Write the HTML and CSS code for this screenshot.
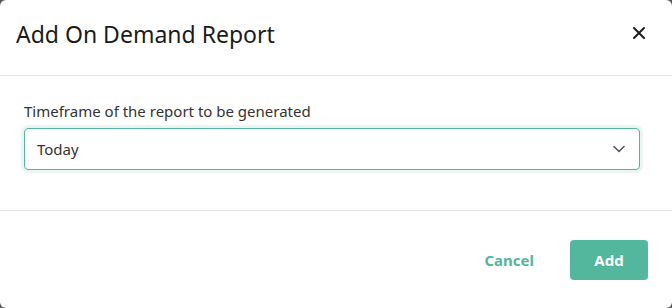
FILE: index.html
```html
<!DOCTYPE html>
<html>
<head>
<meta charset="utf-8">
<link rel="stylesheet" href="styles.css">
</head>
<body>
<div class="dialog">
  <div class="header">
    <h1 class="title">Add On Demand Report</h1>
    <button class="close" aria-label="Close">
      <svg width="14" height="14" viewBox="0 0 14 14"><path d="M2 2L12 12M12 2L2 12" stroke="#1d1d1d" stroke-width="2" stroke-linecap="round"/></svg>
    </button>
  </div>
  <div class="body">
    <label class="label">Timeframe of the report to be generated</label>
    <div class="select">
      <span class="value">Today</span>
      <svg class="chev" width="12" height="8" viewBox="0 0 12 8"><path d="M1 1.5L6 6.5L11 1.5" fill="none" stroke="#555a66" stroke-width="1.6" stroke-linecap="round" stroke-linejoin="round"/></svg>
    </div>
  </div>
  <div class="footer">
    <button class="btn-cancel">Cancel</button>
    <button class="btn-add">Add</button>
  </div>
</div>
</body>
</html>
```
FILE: styles.css
```css
html, body {
  margin: 0;
  padding: 0;
  background: #5a5a5a;
  width: 672px;
  height: 308px;
  overflow: hidden;
}
.dialog {
  width: 672px;
  height: 308px;
  background: #fff;
  border-radius: 6px;
  font-family: "Noto Sans", "Open Sans", sans-serif;
  color: #212121;
  display: flex;
  flex-direction: column;
  box-sizing: border-box;
}
.header {
  height: 76px;
  box-sizing: border-box;
  border-bottom: 1px solid #e6e6e6;
  display: flex;
  align-items: center;
  justify-content: space-between;
  padding: 0 26px 8px 16px;
}
.title {
  margin: 0;
  font-size: 23px;
  font-weight: 400;
  color: #1b1b1b;
  line-height: 30px;
}
.close {
  border: none;
  background: none;
  padding: 0;
  width: 14px;
  height: 14px;
  display: flex;
  margin-top: -2px;
}
.body {
  height: 135px;
  box-sizing: border-box;
  border-bottom: 1px solid #e6e6e6;
  padding: 25px 32px 0 24px;
  display: flex;
  flex-direction: column;
}
.label {
  font-size: 15px;
  color: #333;
  line-height: 20px;
  margin-bottom: 7px;
}
.select {
  height: 42px;
  box-sizing: border-box;
  border: 1px solid #52b79d;
  border-radius: 4px;
  box-shadow: 0 0 0 3px rgba(82, 183, 157, 0.12);
  display: flex;
  align-items: center;
  justify-content: space-between;
  padding: 0 14px 0 12px;
}
.value {
  font-size: 15px;
  color: #333;
}
.footer {
  flex: 1;
  display: flex;
  justify-content: flex-end;
  align-items: center;
  padding: 0 24px 0 0;
  gap: 36px;
}
.btn-cancel {
  border: none;
  background: none;
  font-family: inherit;
  font-size: 15px;
  font-weight: 700;
  color: #52b79d;
  padding: 0;
}
.btn-add {
  border: none;
  background: #52b79d;
  color: #fff;
  font-family: inherit;
  font-size: 15px;
  font-weight: 700;
  width: 78px;
  height: 40px;
  border-radius: 4px;
}
```
